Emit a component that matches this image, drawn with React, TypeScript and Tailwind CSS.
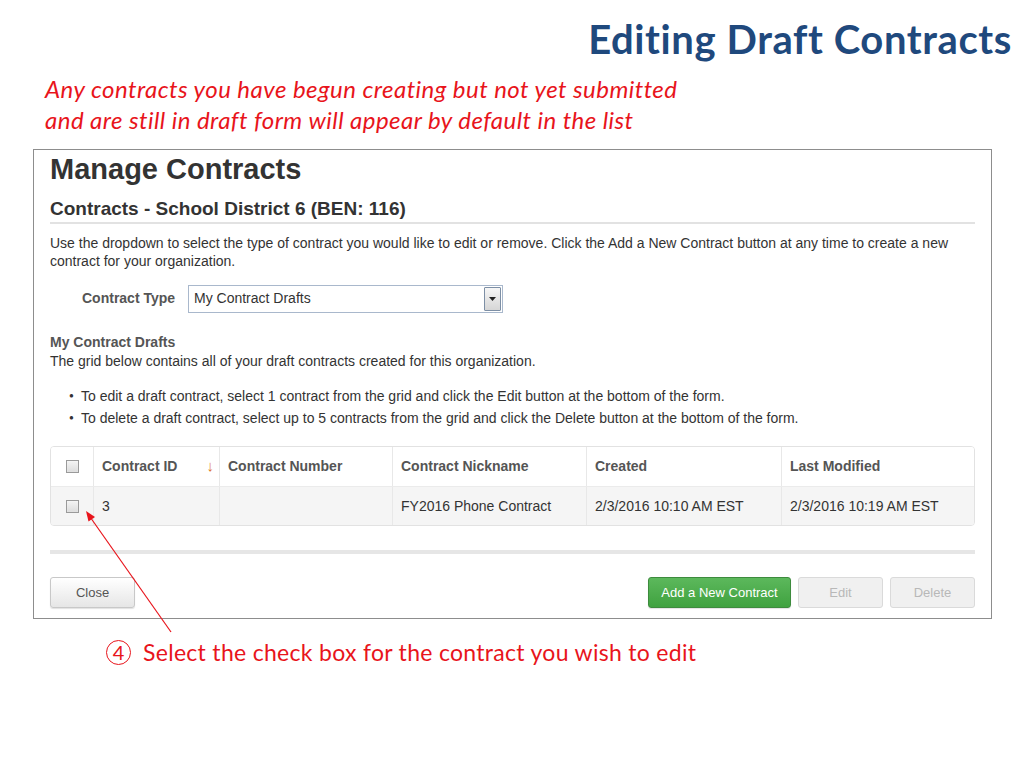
import React from "react";

const arial = { fontFamily: '"Liberation Sans", Arial, sans-serif' };

function Checkbox() {
  return (
    <span className="inline-block w-[13px] h-[13px] border border-[#9a9a9a] bg-gradient-to-b from-[#f4f4f4] to-[#dcdcdc] shadow-[inset_0_0_1px_#fff]" />
  );
}

export default function App() {
  return (
    <div className="relative w-[1024px] h-[768px] bg-white overflow-hidden">
      {/* Title */}
      <div className="h-[74px] pt-[4px] pr-[12px] flex items-center justify-end">
        <h1 className="font-['Lato',sans-serif] font-bold text-[40px] leading-[44px] tracking-[0.6px] text-[#1f497d]">
          Editing Draft Contracts
        </h1>
      </div>

      {/* Subtitle */}
      <div className="-mt-[1px] pl-[45px] font-['Lato',sans-serif] italic text-[24px] leading-[31px] tracking-[0.45px] text-[#e8141b]">
        <div>Any contracts you have begun creating but not yet submitted</div>
        <div>and are still in draft form will appear by default in the list</div>
      </div>

      {/* Panel */}
      <div
        className="mt-[14px] ml-[33px] w-[959px] h-[470px] border border-[#8d8d8d] px-[16px] pt-[3px] text-[#333]"
        style={arial}
      >
        <div className="text-[29px] leading-[33px] font-bold text-[#333]">Manage Contracts</div>
        <div className="mt-[11px] text-[19px] leading-[24px] font-bold text-[#333]">
          Contracts - School District 6 (BEN: 116)
        </div>
        <div className="mt-[1px] h-[2px] bg-[#e2e2e2]" />

        <p className="mt-[10px] text-[14px] leading-[18px] text-[#333]">
          Use the dropdown to select the type of contract you would like to edit or remove. Click the Add a New Contract
          button at any time to create a new contract for your organization.
        </p>

        <div className="mt-[15px] h-[27px] flex items-center pl-[32px]">
          <span className="text-[14px] font-bold text-[#555] w-[106px]">Contract Type</span>
          <div className="w-[315px] h-[28px] border border-[#a9b8cc] bg-white flex items-center justify-between pl-[5px] pr-[1px]">
            <span className="text-[14px] text-[#333]">My Contract Drafts</span>
            <span className="w-[17px] h-[24px] border border-[#7d8fa5] rounded-[1px] bg-gradient-to-b from-[#f6f6f6] to-[#d6d6d6] flex items-center justify-center">
              <svg width="7" height="4" viewBox="0 0 7 4">
                <polygon points="0,0 7,0 3.5,4" fill="#222" />
              </svg>
            </span>
          </div>
        </div>

        <div className="mt-[21px] text-[14px] leading-[18px] font-bold text-[#555]">My Contract Drafts</div>
        <div className="text-[14px] leading-[20px] text-[#333]">
          The grid below contains all of your draft contracts created for this organization.
        </div>

        <ul className="mt-[14px] pl-[19px] text-[14px] leading-[22px] text-[#333]">
          <li className="flex items-center">
            <span className="w-[12px] text-[8px]">●</span>
            <span>To edit a draft contract, select 1 contract from the grid and click the Edit button at the bottom of the form.</span>
          </li>
          <li className="flex items-center">
            <span className="w-[12px] text-[8px]">●</span>
            <span>To delete a draft contract, select up to 5 contracts from the grid and click the Delete button at the bottom of the form.</span>
          </li>
        </ul>

        {/* Table */}
        <div className="mt-[17px] border border-[#e2e2e2] rounded-[4px] overflow-hidden text-[14px]">
          <div className="grid grid-cols-[42px_126px_173px_194px_195px_1fr] h-[39px] bg-white font-bold text-[#555]">
            <div className="flex items-center justify-center">
              <Checkbox />
            </div>
            <div className="flex items-center justify-between pl-[8px] pr-[5px] border-l border-[#e8e8e8]">
              <span>Contract ID</span>
              <span className="text-[#e0782f] font-normal text-[15px]">↓</span>
            </div>
            <div className="flex items-center pl-[8px] border-l border-[#e8e8e8]">Contract Number</div>
            <div className="flex items-center pl-[8px] border-l border-[#e8e8e8]">Contract Nickname</div>
            <div className="flex items-center pl-[8px] border-l border-[#e8e8e8]">Created</div>
            <div className="flex items-center pl-[8px] border-l border-[#e8e8e8]">Last Modified</div>
          </div>
          <div className="grid grid-cols-[42px_126px_173px_194px_195px_1fr] h-[39px] bg-[#f5f5f5] border-t border-[#ebebeb] text-[#333]">
            <div className="flex items-center justify-center">
              <Checkbox />
            </div>
            <div className="flex items-center pl-[8px] border-l border-[#e8e8e8]">3</div>
            <div className="flex items-center pl-[8px] border-l border-[#e8e8e8]"></div>
            <div className="flex items-center pl-[8px] border-l border-[#e8e8e8]">FY2016 Phone Contract</div>
            <div className="flex items-center pl-[8px] border-l border-[#e8e8e8]">2/3/2016 10:10 AM EST</div>
            <div className="flex items-center pl-[8px] border-l border-[#e8e8e8]">2/3/2016 10:19 AM EST</div>
          </div>
        </div>

        <div className="mt-[24px] h-[4px] bg-[#e6e6e6]" />

        <div className="mt-[23px] h-[31px] flex items-center text-[13px]">
          <button className="w-[85px] h-[31px] rounded-[3px] border border-[#c8c8c8] bg-gradient-to-b from-white to-[#e6e6e6] text-[#555] shadow-[0_1px_1px_rgba(0,0,0,0.12)]">
            Close
          </button>
          <div className="flex-1" />
          <button className="w-[143px] h-[31px] rounded-[3px] border border-[#3d8b3d] bg-gradient-to-b from-[#5cb85c] to-[#3fa23f] text-white shadow-[0_1px_1px_rgba(0,0,0,0.12)]">
            Add a New Contract
          </button>
          <button className="ml-[7px] w-[85px] h-[31px] rounded-[3px] border border-[#dadada] bg-[#f0f0f0] text-[#b8b8b8]">
            Edit
          </button>
          <button className="ml-[7px] w-[85px] h-[31px] rounded-[3px] border border-[#dadada] bg-[#f0f0f0] text-[#b8b8b8]">
            Delete
          </button>
        </div>
      </div>

      {/* Annotation */}
      <div className="mt-[18px] pl-[106px] flex items-center font-['Lato',sans-serif] text-[23px] leading-[30px] text-[#e8141b]">
        <span className="w-[25px] h-[25px] rounded-full border border-[#e8141b] flex items-center justify-center text-[20px] leading-none">
          4
        </span>
        <span className="ml-[12px] tracking-[0.3px]">Select the check box for the contract you wish to edit</span>
      </div>

      <svg className="absolute left-0 top-0 pointer-events-none" width="1024" height="768">
        <line x1="171" y1="632" x2="91.5" y2="519" stroke="#e8141b" strokeWidth="1.2" />
        <polygon points="86,511 95,516.9 88.5,521.5" fill="#e8141b" />
      </svg>
    </div>
  );
}
